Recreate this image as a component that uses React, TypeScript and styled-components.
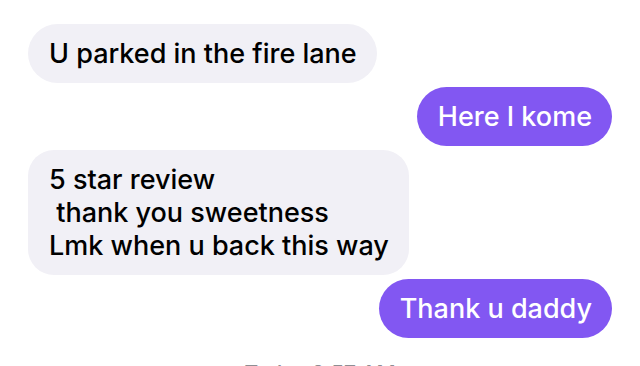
import React from "react";
import styled, { createGlobalStyle } from "styled-components";

const Global = createGlobalStyle`
  html, body { margin: 0; padding: 0; background: #ffffff; }
  body { font-family: Inter, "Noto Sans", "Liberation Sans", sans-serif; overflow: hidden; }
`;

const Thread = styled.div`
  width: 640px;
  height: 366px;
  box-sizing: border-box;
  padding: 24px 28px 0;
  display: flex;
  flex-direction: column;
  gap: 4px;
  overflow: hidden;
`;

const Bubble = styled.div<{ $out?: boolean; $multi?: boolean }>`
  align-self: ${(p) => (p.$out ? "flex-end" : "flex-start")};
  background: ${(p) => (p.$out ? "#8257f2" : "#f1f0f6")};
  color: ${(p) => (p.$out ? "#ffffff" : "#000000")};
  border-radius: ${(p) => (p.$multi ? "26px" : "30px")};
  padding: 13px 20px 13px 21px;
  font-size: 27px;
  line-height: 33px;
  font-weight: 500;
  white-space: pre-wrap;
`;

const Stamp = styled.div`
  margin-top: 19px;
  text-align: center;
  color: #8e8e93;
  font-size: 21px;
  line-height: 26px;
  font-weight: 500;
`;

export default function App() {
  return (
    <>
      <Global />
      <Thread>
        <Bubble>U parked in the fire lane</Bubble>
        <Bubble $out>Here I kome</Bubble>
        <Bubble $multi>{"5 star review\n thank you sweetness\nLmk when u back this way"}</Bubble>
        <Bubble $out>Thank u daddy</Bubble>
        <Stamp>Today 8:57 AM</Stamp>
      </Thread>
    </>
  );
}
